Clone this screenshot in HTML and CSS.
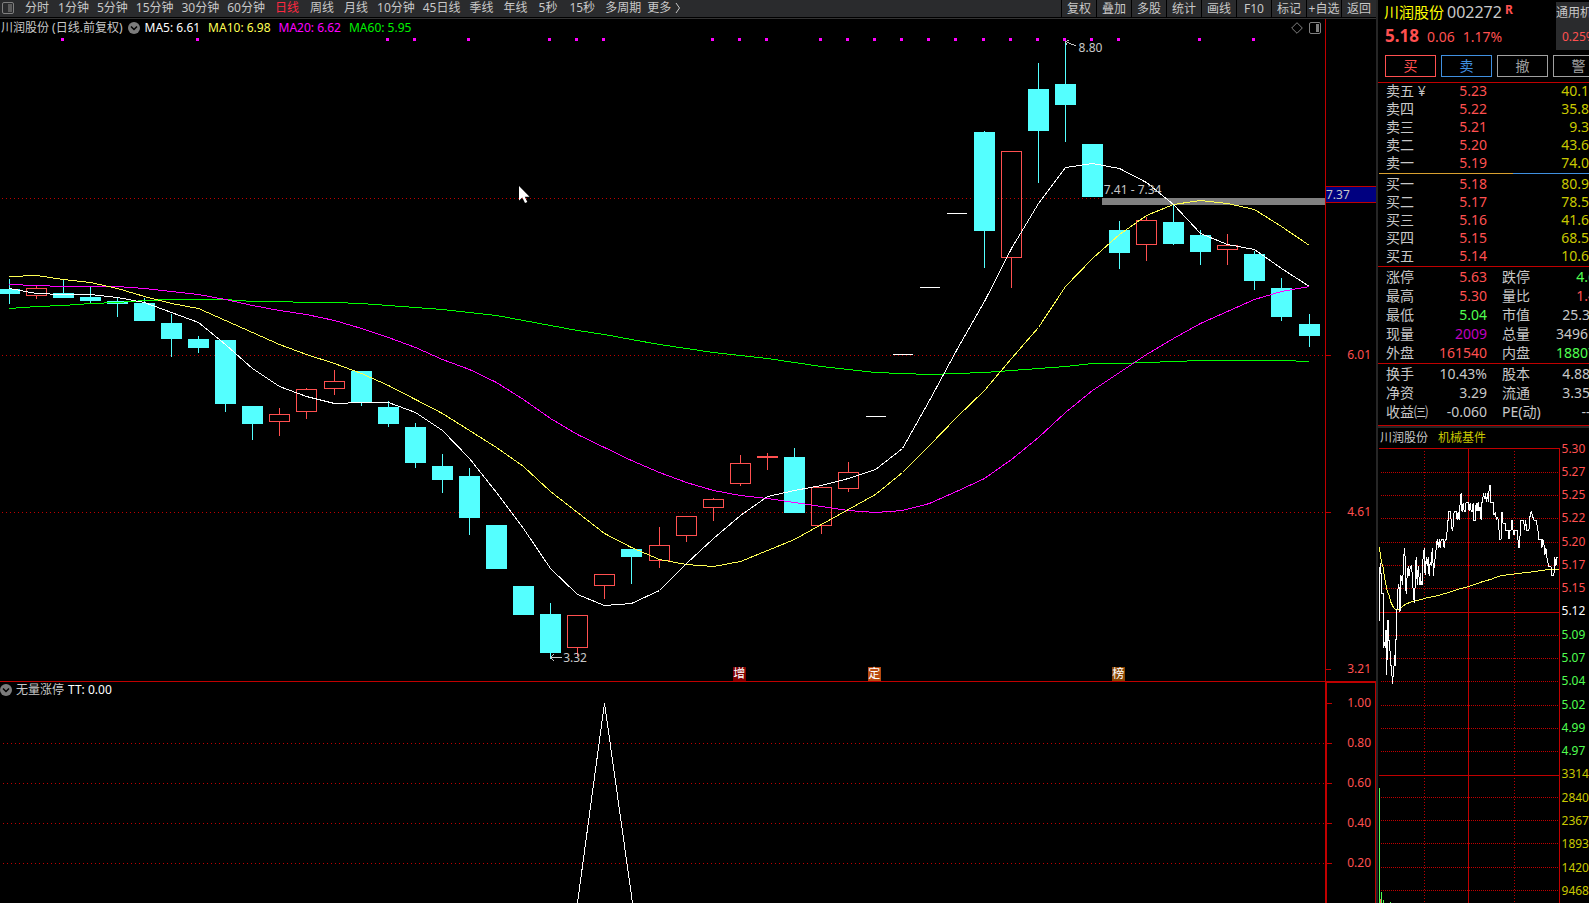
FILE: index.html
```html
<!DOCTYPE html>
<html lang="zh-CN">
<head>
<meta charset="utf-8">
<title>川润股份 002272</title>
<link rel="stylesheet" href="styles.css">
</head>
<body>
<main class="charts">
  <nav class="toolbar">
    <button class="icon-btn" aria-label="侧栏"><svg class="panel-icon" viewBox="0 0 12 12"><rect x="0.5" y="0.5" width="11" height="11" rx="1.5" fill="none" stroke="#808080"/><rect x="6" y="2" width="4" height="8" fill="#5c5c5c"/></svg></button>
    <button class="tab tab-word">分时</button>
    <button class="tab">1分钟</button>
    <button class="tab">5分钟</button>
    <button class="tab">15分钟</button>
    <button class="tab">30分钟</button>
    <button class="tab">60分钟</button>
    <button class="tab tab-wide active">日线</button>
    <button class="tab tab-word">周线</button>
    <button class="tab tab-word">月线</button>
    <button class="tab">10分钟</button>
    <button class="tab">45日线</button>
    <button class="tab tab-word">季线</button>
    <button class="tab tab-word">年线</button>
    <button class="tab tab-wide">5秒</button>
    <button class="tab tab-wide">15秒</button>
    <button class="tab">多周期</button>
    <button class="tab tab-more">更多<svg class="chevron" viewBox="0 0 6 12"><path d="M1 1 L4.500 6 L1 11" fill="none" stroke="#c8c8c8"/></svg></button>
    <div class="tools">
      <button>复权</button><button>叠加</button><button>多股</button><button>统计</button><button>画线</button><button>F10</button><button>标记</button><button>+自选</button><button>返回</button>
    </div>
  </nav>

  <section class="pane pane-price">
    <div class="plot">
      <svg id="price" class="canvas" viewBox="0 19 1325 662" preserveAspectRatio="none"></svg>
      <header class="legend">
        <span class="legend-name">川润股份 (日线.前复权)</span>
        <svg class="drop-icon" viewBox="0 0 12 12"><circle cx="6" cy="6" r="6" fill="#7c7c7c"/><path d="M3 4.500 L6 7.500 L9 4.500" fill="none" stroke="#000" stroke-width="1.500"/></svg>
        <div class="averages">
          <span class="ma5">MA5: 6.61</span>
          <span class="ma10">MA10: 6.98</span>
          <span class="ma20">MA20: 6.62</span>
          <span class="ma60">MA60: 5.95</span>
        </div>
        <span class="legend-icons">
          <svg class="diamond-icon" viewBox="0 0 12 12"><path d="M6 0.700 L11.300 6 L6 11.300 L0.700 6 Z" fill="none" stroke="#808080"/></svg>
          <svg class="panel-icon" viewBox="0 0 12 12"><rect x="0.500" y="0.500" width="11" height="11" rx="1.500" fill="none" stroke="#808080"/><rect x="7" y="2" width="3" height="8" fill="#808080"/></svg>
        </span>
      </header>
      <span class="note" style="left:81.4%;top:4.4%">8.80</span>
      <span class="note" style="left:83.3%;top:25.8%">7.41 - 7.34</span>
      <span class="note" style="left:42.5%;top:96.5%">3.32</span>
      <span class="badge badge-add" style="left:55.3%">增</span>
      <span class="badge" style="left:65.5%">定</span>
      <span class="badge badge-list" style="left:83.9%">榜</span>
      <svg class="cursor" viewBox="0 0 11 17"><path d="M0 0 V14.500 L3.300 11.500 L6 17 L8.300 16 L5.800 10.700 H10.500 Z" fill="#fff"/></svg>
    </div>
    <div class="axis">
      <span class="price-tag">7.37</span>
      <span class="tick" style="top:50.75%">6.01</span>
      <span class="tick" style="top:74.47%">4.61</span>
      <span class="tick" style="top:98.19%">3.21</span>
    </div>
  </section>

  <section class="pane pane-signal">
    <div class="plot">
      <svg id="signal" class="canvas" viewBox="0 682 1325 221" preserveAspectRatio="none"></svg>
      <header class="legend legend-signal">
        <svg class="drop-icon" viewBox="0 0 12 12"><circle cx="6" cy="6" r="6" fill="#7c7c7c"/><path d="M3 4.500 L6 7.500 L9 4.500" fill="none" stroke="#000" stroke-width="1.500"/></svg>
        <span class="legend-name">无量涨停</span>
        <span class="ma5">TT: 0.00</span>
      </header>
    </div>
    <div class="axis">
      <span class="tick" style="top:9.300%">1.00</span>
      <span class="tick" style="top:27.400%">0.80</span>
      <span class="tick" style="top:45.500%">0.60</span>
      <span class="tick" style="top:63.600%">0.40</span>
      <span class="tick" style="top:81.700%">0.20</span>
    </div>
  </section>
</main>

<aside class="quote">
  <header class="stock">
    <div class="stock-main">
      <h1><span class="stock-name">川润股份</span><span class="stock-code">002272</span><sup>R</sup></h1>
      <p class="stock-price"><strong>5.18</strong><span>0.06</span><span>1.17%</span></p>
    </div>
    <div class="sector"><span>通用机</span><span class="up">0.25%</span></div>
  </header>
  <div class="actions">
    <button class="buy">买</button><button class="sell">卖</button><button>撤</button><button>警</button>
  </div>
  <table class="book">
    <tbody>
      <tr><th>卖五 ¥</th><td class="up">5.23</td><td>40.1</td></tr>
      <tr><th>卖四</th><td class="up">5.22</td><td>35.8</td></tr>
      <tr><th>卖三</th><td class="up">5.21</td><td>9.3</td></tr>
      <tr><th>卖二</th><td class="up">5.20</td><td>43.6</td></tr>
      <tr><th>卖一</th><td class="up">5.19</td><td>74.0</td></tr>
    </tbody>
  </table>
  <div class="balance"><i></i></div>
  <table class="book">
    <tbody>
      <tr><th>买一</th><td class="up">5.18</td><td>80.9</td></tr>
      <tr><th>买二</th><td class="up">5.17</td><td>78.5</td></tr>
      <tr><th>买三</th><td class="up">5.16</td><td>41.6</td></tr>
      <tr><th>买四</th><td class="up">5.15</td><td>68.5</td></tr>
      <tr><th>买五</th><td class="up">5.14</td><td>10.6</td></tr>
    </tbody>
  </table>
  <dl class="stats">
    <dt>涨停</dt><dd class="up">5.63</dd><dt>跌停</dt><dd class="down">4.61</dd>
    <dt>最高</dt><dd class="up">5.30</dd><dt>量比</dt><dd class="up">1.40</dd>
    <dt>最低</dt><dd class="down">5.04</dd><dt>市值</dt><dd>25.3亿</dd>
    <dt>现量</dt><dd class="now">2009</dd><dt>总量</dt><dd>349613</dd>
    <dt>外盘</dt><dd class="up">161540</dd><dt>内盘</dt><dd class="down">188073</dd>
  </dl>
  <dl class="stats stats-last">
    <dt>换手</dt><dd>10.43%</dd><dt>股本</dt><dd>4.88亿</dd>
    <dt>净资</dt><dd>3.29</dd><dt>流通</dt><dd>3.35亿</dd>
    <dt>收益㈢</dt><dd>-0.060</dd><dt>PE(动)</dt><dd>-----</dd>
  </dl>
  <header class="mini-head"><span>川润股份</span><span class="industry">机械基件</span></header>
  <div class="mini">
    <svg id="intraday" class="mini-canvas" viewBox="1379 448 181 455" preserveAspectRatio="none"></svg>
    <ol class="mini-axis">
      <li class="up">5.30</li><li class="up">5.27</li><li class="up">5.25</li><li class="up">5.22</li><li class="up">5.20</li><li class="up">5.17</li><li class="up">5.15</li>
      <li>5.12</li>
      <li class="down">5.09</li><li class="down">5.07</li><li class="down">5.04</li><li class="down">5.02</li><li class="down">4.99</li><li class="down">4.97</li>
      <li class="vol">3314</li><li class="vol">2840</li><li class="vol">2367</li><li class="vol">1893</li><li class="vol">1420</li><li class="vol">9468</li>
    </ol>
  </div>
</aside>
<script src="chart.js"></script>
</body>
</html>
```
FILE: styles.css
```css
* { box-sizing: border-box; }

body {
  margin: 0;
  height: 100vh;
  display: grid;
  grid-template-columns: minmax(0, 1fr) 213px;
  overflow: hidden;
  background: #000;
  color: #c8c8c8;
  font-family: "Noto Sans", "Noto Sans CJK SC", sans-serif;
  font-size: 12px;
  line-height: 16px;
}

button {
  margin: 0;
  padding: 0;
  border: 0;
  background: none;
  color: inherit;
  font: inherit;
  white-space: nowrap;
}

svg { display: block; }

.up { color: #ff5050; }
.down { color: #50ff50; }

/* Left side */
.charts {
  display: flex;
  flex-direction: column;
  min-width: 0;
  min-height: 0;
}

.toolbar {
  display: flex;
  flex: none;
  height: 19px;
  background: linear-gradient(#2a2b2d 17px, #000 17px 18px, #333 18px);
}

.toolbar button { height: 16px; line-height: 16px; }
.icon-btn { width: 20px; padding-left: 2px; }
.panel-icon { width: 12px; height: 12px; }
.toolbar .tab { padding: 0 4px; }
.toolbar .tab-word { padding: 0 5px; }
.toolbar .tab-wide { padding: 0 6px; }
.toolbar .active { color: #ff2840; }
.toolbar .tab-more { display: flex; align-items: center; gap: 4px; padding: 0 2px; }
.chevron { width: 6px; height: 12px; }

.tools {
  display: grid;
  grid-template-columns: repeat(9, 35px);
  margin-left: auto;
}

.tools button {
  height: 17px;
  border-left: 1px solid #000;
}

.pane { display: flex; min-height: 0; }
.pane-price { flex: 3 1 0; }
.pane-signal { flex: 1 1 0; }

.plot {
  position: relative;
  flex: 1;
  min-width: 0;
}

.pane-price .plot {
  border-right: 1px solid #c00000;
  border-bottom: 1px solid #c00000;
}

.canvas {
  position: absolute;
  inset: 0;
  width: 100%;
  height: 100%;
}

.canvas *, .mini-canvas * {
  vector-effect: non-scaling-stroke;
  shape-rendering: crispEdges;
}

.legend {
  position: relative;
  display: flex;
  align-items: center;
  gap: 5px;
  padding: 0 4px 0 1px;
  height: 17px;
}

.averages { display: flex; gap: 8px; }
.legend-signal { padding-left: 0; height: 15px; gap: 4px; }
.drop-icon { width: 12px; height: 12px; }
.legend-icons { display: flex; gap: 6px; margin-left: auto; }
.diamond-icon { width: 12px; height: 12px; }
.ma5 { color: #fff; }
.ma10 { color: #ffff54; }
.ma20 { color: #ff00ff; }
.ma60 { color: #00f000; }

.note {
  position: absolute;
  transform: translateY(-50%);
  white-space: nowrap;
}

.badge {
  position: absolute;
  bottom: 0;
  width: 13px;
  height: 14px;
  background: #b84a10;
  color: #fff;
  line-height: 14px;
  text-align: center;
}

.badge-add { background: #800000; }
.badge-list { background: #884400; }

.cursor {
  position: absolute;
  left: 39.2%;
  top: 25.2%;
  width: 11px;
  height: 17px;
}

.axis { position: relative; color: #ff5050; }
.pane-price .axis { width: 50px; border-bottom: 1px solid #c00000; }

.pane-signal .axis {
  width: 51px;
  border: solid #c00000;
  border-width: 1px 1px 0 2px;
}

.tick {
  position: absolute;
  left: 0;
  right: 0;
  padding-right: 5px;
  text-align: right;
  transform: translateY(-50%);
}

.pane-signal .tick { padding-right: 4px; }

.tick::before {
  content: "";
  position: absolute;
  left: 0;
  top: 8px;
  width: 5px;
  border-top: 1px solid #c00000;
}

.price-tag {
  position: absolute;
  left: 0;
  right: 0;
  top: 25.200%;
  height: 17px;
  border: solid #c00000;
  border-width: 1px 0;
  background: #000080;
  color: #c8c8c8;
  line-height: 15px;
}

/* Right side */
.quote {
  display: flex;
  flex-direction: column;
  min-height: 0;
  overflow: hidden;
  border-left: 2px solid #262626;
  font-size: 14px;
}

.stock {
  display: flex;
  justify-content: space-between;
  padding: 2px 0 5px 6px;
}

h1 {
  display: flex;
  gap: 3px;
  margin: 0;
  font-size: 15px;
  font-weight: 400;
  line-height: 20px;
}

.stock-name { color: #ffff00; }
.stock-code { font-size: 16px; }

sup {
  color: #ff5050;
  font-size: 12px;
  font-weight: 700;
  line-height: 16px;
}

.stock-price {
  display: flex;
  align-items: baseline;
  gap: 8px;
  margin: 0;
  padding: 4px 1px 0;
  color: #ff5050;
  line-height: 20px;
}

.stock-price strong { font-size: 17px; }

.sector {
  display: flex;
  flex-direction: column;
  justify-content: space-between;
  width: 33px;
  height: 48px;
  padding: 3px 0 5px;
  overflow: hidden;
  background: #2a2b2d;
  font-size: 12px;
  white-space: nowrap;
}

.sector .up { padding-left: 6px; }

.actions {
  display: grid;
  grid-template-columns: repeat(4, 51px);
  gap: 5px;
  padding: 0 0 5px 7px;
}

.actions button {
  height: 22px;
  border: 1px solid #a0a0a0;
  color: #a0a0a0;
  line-height: 18px;
}

.actions .buy { border-color: #ff5050; color: #ff5050; }
.actions .sell { border-color: #4090e0; color: #4090e0; }

.book {
  width: 100%;
  border-top: 1px solid #c00000;
  border-collapse: collapse;
  table-layout: fixed;
}

.balance + .book { border-top: 0; }
.book th, .book td { height: 18px; padding: 0; line-height: 16px; vertical-align: top; }
.book th { width: 60px; padding-left: 8px; font-weight: 400; text-align: left; }
.book td { text-align: right; }
.book td:nth-child(2) { width: 49px; }
.book td:nth-child(3) { color: #c8c800; }

.balance {
  height: 1px;
  margin: 0 0 2px 1px;
  background: #4090e0;
}

.balance i { display: block; width: 134px; height: 1px; background: #d8a030; }

.stats {
  display: grid;
  grid-template-columns: 50px 51px 48px 69px;
  column-gap: 0;
  margin: 0;
  padding: 0 0 1px 8px;
  border-top: 1px solid #c00000;
  line-height: 19px;
  white-space: nowrap;
}

.stats-last { padding-bottom: 4px; border-bottom: 1px solid #c00000; }
.stats dd { margin: 0; text-align: right; }
.stats dt:nth-of-type(even) { padding-left: 15px; }
.now { color: #c000c0; }

.mini-head {
  display: flex;
  gap: 10px;
  height: 22px;
  padding: 1px 0 0 2px;
  border-top: 2px solid #262626;
  font-size: 12px;
  line-height: 18px;
}

.industry { color: #c8c800; }

.mini {
  display: flex;
  flex: 1;
  min-height: 0;
  padding-left: 1px;
}

.mini-canvas { width: 181px; height: 100%; }

.mini-axis {
  display: flex;
  flex-direction: column;
  justify-content: space-between;
  margin: -7px 0 0;
  padding: 0 0 4px 2px;
  color: #fff;
  font-size: 12px;
  line-height: 16px;
  list-style: none;
}

.vol { color: #c8c800; }
```
FILE: chart.js
```js
const NS = "http://www.w3.org/2000/svg";
const RED = "#ff5050", CYAN = "#54ffff", GRID = "#c00000";

function add(svg, tag, attrs) {
  const el = document.createElementNS(NS, tag);
  for (const k in attrs) el.setAttribute(k, attrs[k]);
  svg.appendChild(el);
  return el;
}
function line(svg, x1, y1, x2, y2, stroke, dash) {
  add(svg, "line", { x1, y1, x2, y2, stroke, "stroke-dasharray": dash || "none" });
}
function poly(svg, pts, stroke, extra) {
  add(svg, "polyline", Object.assign({ points: pts.join(" "), fill: "none", stroke }, extra));
}

/* Daily candles: body top, body bottom, wick top, wick bottom, kind */
const candles = [
  [289,294,279,304,"c"],[288,296,286,299,"r"],[293,298,279,298,"c"],[297,301,287,303,"c"],[301,304,297,317,"c"],
  [303,321,298,321,"c"],[323,339,314,357,"c"],[339,348,336,353,"c"],[340,404,340,412,"c"],[406,424,406,440,"c"],
  [414,422,408,436,"r"],[389,412,388,419,"r"],[381,389,370,395,"r"],[371,402,371,406,"c"],[407,424,401,427,"c"],
  [427,463,423,468,"c"],[466,480,454,493,"c"],[476,518,468,535,"c"],[525,569,525,569,"c"],[586,615,586,615,"c"],
  [614,653,603,659,"c"],[615,648,615,656,"r"],[574,586,574,599,"r"],[549,557,549,584,"c"],[545,561,527,568,"r"],
  [516,536,516,542,"r"],[499,508,498,521,"r"],[463,484,455,486,"r"],[456,458,453,470,"r"],[457,513,448,513,"c"],
  [487,526,487,534,"r"],[472,489,462,492,"r"],[416,416,416,416,"w"],[354,354,354,354,"w"],[287,287,287,287,"w"],
  [213,213,213,213,"w"],[132,231,131,268,"c"],[151,258,151,288,"r"],[89,131,63,183,"c"],[84,105,41,142,"c"],
  [144,197,144,197,"c"],[230,253,221,269,"c"],[220,245,217,261,"r"],[222,244,204,245,"c"],[235,252,230,265,"c"],
  [245,250,234,265,"r"],[254,281,251,290,"c"],[288,317,278,321,"c"],[324,336,314,347,"c"]
];
const averages = {
  "#ffffff": [288,293,294,294,297,302,312,322,344,368,386,396,403,402,402,412,430,458,492,528,568,594,605,603,590,563,538,515,496,490,485,478,469,448,400,350,301,248,203,167,163,168,182,204,233,244,249,268,286],
  "#ffff54": [276,275,279,282,288,296,303,308,320,332,344,354,363,373,385,399,413,430,447,466,491,512,533,547,559,564,566,561,550,539,524,509,494,472,445,417,390,358,327,286,258,234,215,204,200,203,209,226,245],
  "#ff00ff": [284,285,286,286,286,288,291,294,299,305,310,314,320,328,337,347,359,369,382,399,418,434,447,460,472,482,490,495,498,502,506,510,512,510,503,491,478,459,437,412,390,372,354,338,323,311,299,291,286],
  "#00ff00": [308,306,305,303,302,300,299,299,299,301,301,302,302,303,305,307,309,312,315,320,325,330,334,339,344,348,352,355,358,362,366,369,372,373,374,373,372,370,368,366,363,363,362,361,360,360,360,360,361]
};
const cx = i => Math.floor(9 + i * 27.085) + 0.5;

const price = document.getElementById("price");
[198, 355, 512].forEach(y => line(price, 2, y + .5, 1325, y + .5, GRID, "1 3"));
add(price, "rect", { x: 1102, y: 198, width: 223, height: 7, fill: "#808080" });
candles.forEach(([t, b, h, l, kind], i) => {
  const x = cx(i);
  if (kind === "w") return line(price, x - 10, t + .5, x + 10, t + .5, "#fff");
  if (kind === "c") {
    line(price, x, h, x, l, CYAN);
    add(price, "rect", { x: x - 10.5, y: t, width: 21, height: b - t, fill: CYAN });
  } else {
    line(price, x, h, x, t, RED);
    line(price, x, b, x, l, RED);
    add(price, "rect", { x: x - 10, y: t + .5, width: 20, height: b - t - 1, fill: "none", stroke: RED });
  }
});
for (const color of ["#00ff00", "#ff00ff", "#ffff54", "#ffffff"])
  poly(price, averages[color].map((y, i) => cx(i) + "," + (y + .5)), color);
[2,7,14,15,17,20,21,22,26,27,28,30,31,32,33,34,35,36,37,38,39,40,41,44,46].forEach(i =>
  add(price, "rect", { x: cx(i) - 2.5, y: 38, width: 3, height: 3, fill: "#ff00ff" }));
poly(price, ["1065.5,41.5", "1076,46"], "#c8c8c8");
poly(price, ["1069,40", "1065.5,41.5", "1067,45"], "#c8c8c8");
line(price, 551, 657.5, 562, 657.5, "#c8c8c8");
poly(price, ["554,654", "550.5,657.5", "554,661"], "#c8c8c8");

const signal = document.getElementById("signal");
[743, 783, 823, 863].forEach(y => line(signal, 3, y + .5, 1325, y + .5, GRID, "1 3"));
poly(signal, ["577.5,903", "604.5,703", "632.5,903"], "#fff");

/* Intraday */
const intra = document.getElementById("intraday");
[472,495,518,542,565,588,635,658,681,705,728,751,797,820,843,867,890].forEach(y =>
  line(intra, 1381, y + .5, 1559, y + .5, GRID, "1 1"));
[1424, 1514].forEach(x => line(intra, x + .5, 451, x + .5, 903, GRID, "1 2"));
[448, 612, 775].forEach(y => line(intra, 1379, y + .5, 1560, y + .5, GRID));
[1468, 1559].forEach(x => line(intra, x + .5, 448, x + .5, 903, GRID));
const third = { transform: "translate(1369 440) scale(0.33333)" };
poly(intra, ["31,320 37,365 43,383 46,410 54,450 60,465 66,487 74,503 82,509 92,506 110,492 125,486 150,480 170,474 200,468 240,457 270,447 300,439 340,425 365,418 395,407 440,401 500,394 540,388 571,388"], "#ffff54", third);
poly(intra, ["32,542 32,395 34,370 34,395 36,395 37,460 43,460 43,622 46,605 49,622 49,570 52,570 52,703 55,640 55,542 60,542 60,600 64,640 64,676 68,676 70,731 74,690 78,645 79,676 79,600 82,598 82,515 86,500 86,455 89,433 93,460 93,514 96,480 96,406 101,433 106,325 109,355 109,430 112,460 115,400 118,378 118,406 121,406 124,380 127,378 130,400 130,420 134,460 136,487 139,430 139,380 142,352 145,433 148,378 152,433 155,433 155,400 157,433 160,433 160,370 163,352 166,325 166,365 169,406 172,352 175,378 178,350 178,378 181,406 184,365 187,378 190,325 193,378 193,406 196,378 199,352 202,325 205,298 209,325 211,298 214,325 217,298 223,298 226,325 229,298 233,298 235,270 235,240 238,240 240,213 244,213 247,240 250,270 252,270 256,215 262,215 265,240 268,215 271,240 274,190 277,160 277,190 280,215 283,190 286,213 289,213 292,187 298,187 301,213 304,190 307,213 310,213 313,190 313,240 319,240 322,190 325,213 328,187 331,213 334,200 337,240 338,187 341,187 344,160 347,178 350,160 353,187 356,160 359,187 361,150 364,134 364,187 373,187 376,225 380,215 383,240 387,230 390,255 393,298 397,298 400,215 403,250 409,250 409,270 418,270 421,298 424,270 427,270 430,240 433,270 436,285 439,270 445,270 448,298 451,325 454,290 457,240 465,240 468,270 471,240 474,270 481,270 484,230 488,213 494,235 497,240 503,240 508,270 511,298 518,298 520,325 523,298 526,310 529,345 532,325 535,352 540,378 547,378 550,390 550,406 556,406 559,352 562,378 565,352 569,352"], "#fff", third);
[[1379, 788, "#50ff50"], [1380, 899, RED], [1381, 892, "#50ff50"], [1383, 900, "#50ff50"], [1390, 902, "#50ff50"]].forEach(([x, y, fill]) =>
  add(intra, "rect", { x, y, width: 1, height: 903 - y, fill }));
```
